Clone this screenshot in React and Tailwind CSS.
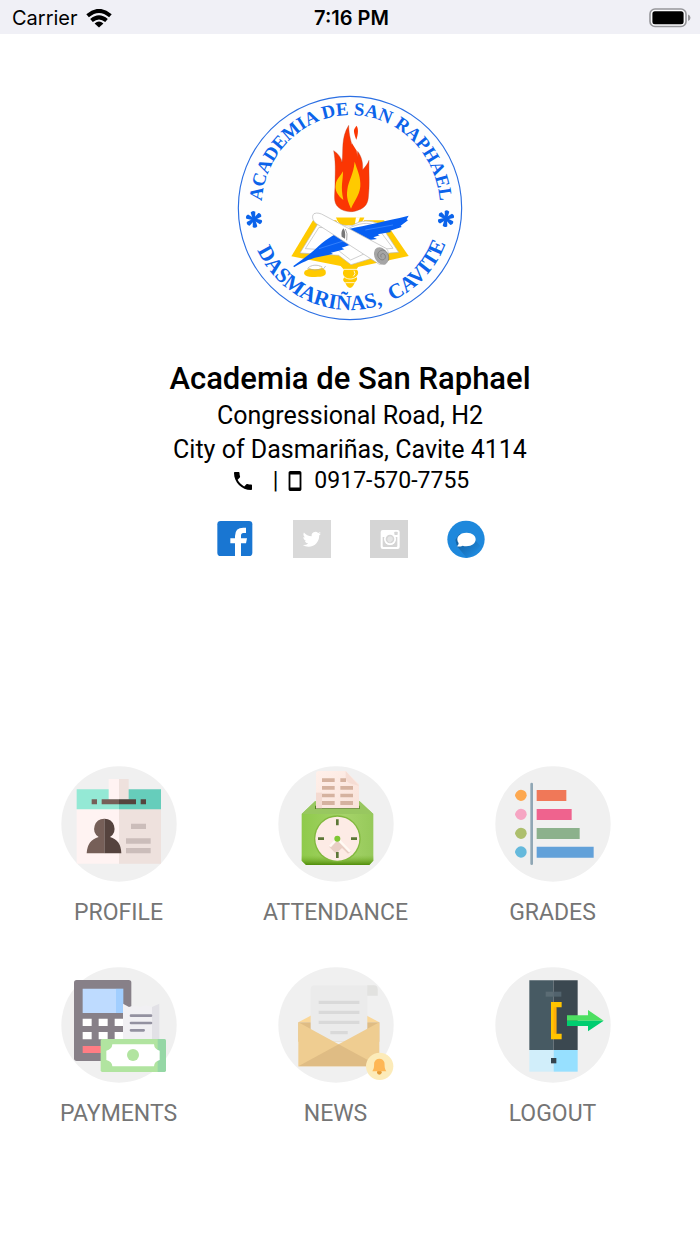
import React from "react";

function SchoolSeal() {
  return (
    <svg className="h-[236px] w-[240px]" viewBox="0 0 720 708" role="img" aria-label="School seal">
      <defs>
        <path id="seal-top" d="M94 356 A266 279 0 0 1 630 356" />
        <path id="seal-bottom" d="M54 354 A306 306 0 0 0 666 354" />
      </defs>
      <circle cx="360" cy="354" r="335" fill="#fefefe" stroke="#2b6fe3" strokeWidth="3.5" />
      <g fill="#0b63ea" fontFamily="'Liberation Serif', serif" fontWeight="700">
        <text fontSize="56" textAnchor="middle">
          <textPath href="#seal-top" startOffset="50%">ACADEMIA DE SAN RAPHAEL</textPath>
        </text>
        <text fontSize="64" textAnchor="middle">
          <textPath href="#seal-bottom" startOffset="37%">DASMARIÑAS,</textPath>
        </text>
        <text fontSize="64" textAnchor="middle">
          <textPath href="#seal-bottom" startOffset="76.2%">CAVITE</textPath>
        </text>
      </g>
      <g fill="#0b63ea">
        {[[72, 388], [648, 386]].map(([x, y]) => (
          <g key={x} transform={`translate(${x} ${y}) rotate(${x < 300 ? -8 : 8})`}>
            {[0, 60, 120, 180, 240, 300].map((a) => (
              <path key={a} d="M-3 2 L-7 -22 Q0 -29 7 -22 L3 2Z" transform={`rotate(${a})`} />
            ))}
          </g>
        ))}
      </g>
      {/* flame */}
      <path d="M356 106 C357 138 364 158 370 177 C373 198 373 212 374 214 C384 208 380 196 383 184 C396 202 399 219 398 239 C407 230 413 221 417 211 C416 250 420 280 415 323 C413 345 400 355 388 359 C370 368 342 368 325 352 C308 337 315 315 315 280 C316 240 317 216 311 182 C326 192 334 204 336 217 C341 180 332 145 356 106Z" fill="#fb3603" stroke="#b3462a" strokeWidth="1" />
      <path d="M366 160 L380 182 L386 240 H366Z" fill="#fb3603" />
      <path d="M379 107 C386 113 385 133 379 149 C376 142 371 127 372 120 C374 114 377 112 379 107Z" fill="#fb3603" />
      <path d="M339 244 C339 275 331 286 340 330 C323 316 314 300 317 284 C319 266 331 260 339 244Z" fill="#ffca00" />
      <path d="M374 215 C381 239 390 253 391 280 C393 309 375 329 363 356 C356 338 348 324 352 299 C356 270 370 256 374 215Z" fill="#ffca00" />
      {/* stand and book */}
      <path d="M249 391 L462 391 L536 498 L366 535 L184 499Z" fill="#ffca00" />
      <path d="M316 381 H405 C401 394 394 400 385 407 H337 C327 402 320 395 316 381Z" fill="#ffca00" stroke="#fff" strokeWidth="3" />
      <path d="M378 382 H390 L384 399 H375Z" fill="#fff" />
      <g fill="#fff" stroke="#b8b8b8" strokeWidth="2">
        <path d="M262 404 L340 405 Q358 411 369 406 C392 389 420 390 451 403 L506 487 L478 489 L363 524 L326 496 L210 489Z" />
        <path d="M267 412 L348 419 C388 398 415 395 439 408 L489 475 L428 480 L362 510 L326 482 L226 476Z" />
      </g>
      {/* feather */}
      <path d="M190 528 C222 506 246 487 266 468 C290 446 327 424 356 417 C411 405 460 395 536 377 L530 388 L534 391 L512 407 L515 411 L480 422 L483 426 L443 433 L449 436 L430 442 L441 447 L388 454 C365 464 345 470 335 473 L343 478 L303 488 L309 492 L265 501 C236 507 212 520 192 532Z" fill="#075ff2" />
      <path d="M267 476 L375 442 M406 420 L489 405" fill="none" stroke="#4a8fff" strokeWidth="2" />
      {/* scroll */}
      <path d="M252 371 C262 367 272 370 282 376 L468 475 C486 489 463 526 448 523 L264 404 C251 398 242 380 252 371Z" fill="#fff" stroke="#b5b5b5" strokeWidth="2" />
      <path d="M340 415 Q348 424 345 446 L335 440 Q332 425 340 415Z" fill="#777" />
      <path d="M346 417 Q354 429 350 451" fill="none" stroke="#aaa" strokeWidth="3" />
      <ellipse cx="454" cy="498" rx="20" ry="28" transform="rotate(-28 454 498)" fill="#a5a5a5" />
      <path d="M454 502 C448 493 459 486 465 495 C470 506 459 514 450 507 C438 498 443 483 457 480 C471 481 480 497 475 512" fill="none" stroke="#737373" strokeWidth="2" />
      {/* ink pot */}
      <path d="M235 538 C244 525 266 523 278 535 L286 541 C292 557 281 561 255 561 C229 561 216 554 225 542Z" fill="#ffca00" />
      <path d="M236 535 C244 524 266 524 276 534 Q256 541 236 535Z" fill="#fff" />
      <path d="M232 536 Q253 544 280 537 L287 528 M234 534 C243 525 260 522 277 531" fill="none" stroke="#aaa" strokeWidth="2" />
      {/* stand base */}
      <path d="M332 528 H386 L380 538 C388 548 384 555 378 560 C386 567 378 573 374 578 C370 588 366 593 360 594 C352 592 348 584 346 578 C337 572 338 566 345 561 C337 554 338 546 342 539Z" fill="#ffca00" />
      <path d="M341 538 H381 M344 562 C355 569 367 569 379 561 M346 578 H374 M372 542 Q379 552 370 559" fill="none" stroke="#fff" strokeWidth="2.5" />
    </svg>
  );
}

const tileSvg = "size-[116px]";

function ProfileIcon() {
  return (
    <svg className={tileSvg} viewBox="33 33 348 348" aria-hidden="true">
      <circle cx="207" cy="207" r="173" fill="#f0f0f0" />
      <path d="M80 162H207V326H80z" fill="#fff3f2" /><path d="M207 162H333V326H207z" fill="#eee1dd" />
      <path d="M80 103H207V163H80z" fill="#94e9d5" /><path d="M207 103H333V163H207z" fill="#66cdbb" />
      <path d="M176 72H207V134H176z" fill="#fff3f2" /><path d="M207 72H236V134H207z" fill="#eee1dd" />
      <path d="M125 133h16v15h-16zM155 133h52v15h-52z" fill="#765f58" />
      <path d="M207 133h51v15h-51zM272 133h16v15h-16z" fill="#55433e" />
      <path d="M163 191A30 30 0 0 0 146 246Q112 255 110 295H163Z" fill="#765f58" />
      <path d="M163 191A30 30 0 0 1 180 246Q213 255 214 295H163Z" fill="#55433e" />
      <path d="M243 206h45v16h-45zM228 250h74v16h-74zM228 279h74v16h-74z" fill="#cbbdba" />
    </svg>
  );
}

function AttendanceIcon() {
  return (
    <svg className={tileSvg} viewBox="54 33 348 348" aria-hidden="true">
      <defs>
        <linearGradient id="att-box" x1="0" y1="0" x2="1" y2="0"><stop stopColor="#8fca4b" /><stop offset=".6" stopColor="#a5d369" /><stop offset="1" stopColor="#96c95a" /></linearGradient>
        <linearGradient id="att-foot" x1="0" y1="0" x2="0" y2="1"><stop stopColor="#7cb52e" stopOpacity="0" /><stop offset="1" stopColor="#508c0a" /></linearGradient>
        <linearGradient id="att-paper" x1="0" y1="0" x2="1" y2="1"><stop stopColor="#fff0ea" /><stop offset="1" stopColor="#f9e2d9" /></linearGradient>
      </defs>
      <circle cx="228" cy="207" r="173" fill="#f0f0f0" />
      <path d="M165 139H299L340 177V317L328 330H138L125 317V177Z" fill="url(#att-box)" />
      <path d="M165 139H299L340 177H125Z" fill="#98c760" />
      <path d="M125 300H340V317L328 330H138L125 317Z" fill="url(#att-foot)" />
      <path d="M165 152h134v10H165z" fill="#527d20" />
      <path d="M176 48H257L297 88V160H168V56Q168 48 176 48Z" fill="url(#att-paper)" />
      <path d="M168 113h18v47h-18z" fill="#efd3c9" opacity=".7" />
      <path d="M257 48L297 93L267 84Q259 80 257 70Z" fill="#f6ddd4" />
      <path d="M186 70h38v11h-38zM241 70h17v11h-17zM186 93h38v11h-38zM241 93h38v11h-38zM186 116h38v11h-38zM241 116h38v11h-38zM186 138h38v12h-38zM241 138h38v12h-38z" fill="#d5b29f" />
      <circle cx="232" cy="251" r="70" fill="#81b83d" />
      <circle cx="232" cy="251" r="66" fill="#fdebe5" />
      <path d="M231 252L208 276L228 296L246 279L264 296L272 290Z" fill="#e9cfc5" />
      <path d="M232 251L210 274M232 251L270 290" stroke="#fffaf4" strokeWidth="7" />
      <path d="M228 193h8v18h-8zM228 291h8v18h-8zM174 247h18v8h-18zM273 247h18v8h-18z" fill="#5d7737" />
      <circle cx="232" cy="251" r="9" fill="#7fc633" />
    </svg>
  );
}

function GradesIcon() {
  return (
    <svg className={tileSvg} viewBox="45 33 348 348" aria-hidden="true">
      <circle cx="219" cy="207" r="173" fill="#f0f0f0" />
      <path d="M155 87V326" stroke="#90a7b5" strokeWidth="8" strokeLinecap="round" />
      {[[121, "#fda850"], [178, "#f6a5c3"], [235, "#adbf6d"], [291, "#65b9dc"]].map(([y, c]) => (
        <path key={y} d="M-18 0C-17 -7 -10 -17 0 -17A17 17 0 0 1 0 17C-10 17 -17 7 -18 0Z" fill={c} transform={`translate(123 ${y})`} />
      ))}
      <path d="M170 105h89v33h-89z" fill="#f07858" />
      <path d="M170 162h105v33H170z" fill="#ef638e" />
      <path d="M170 219h129v33H170z" fill="#8cb18c" />
      <path d="M170 275h171v33H170z" fill="#62a1d9" />
    </svg>
  );
}

function PaymentsIcon() {
  return (
    <svg className={tileSvg} viewBox="33 36 348 348" aria-hidden="true">
      <circle cx="207" cy="210" r="173" fill="#f0f0f0" />
      <rect x="72" y="75" width="172" height="243" rx="8" fill="#878088" />
      <path d="M98 101h100v73H98z" fill="#bedbff" /><path d="M198 101h22v73h-22z" fill="#a1ceff" />
      <path d="M98 191h27v22H98zM146 191h27v22h-27zM194 191h27v22h-27zM98 231h27v22H98zM146 231h27v22h-27zM194 231h27v22h-27z" fill="#fff" />
      <path d="M98 273h56v21H98z" fill="#ff7d84" />
      <path d="M219 146L237 156L253 151L270 156L287 151L306 156V253H219Z" fill="#f1f0f3" />
      <path d="M306 156L328 146V253H306Z" fill="#e2e1e6" />
      <path d="M243 182h60M243 204h60M243 226h38" stroke="#9391a0" strokeWidth="8" strokeLinecap="round" />
      <rect x="152" y="252" width="195" height="99" rx="5" fill="#b1e4a0" />
      <path d="M323 252h20q5 0 5 5v89q0 5-5 5h-20z" fill="#95d7a5" />
      <path d="M187 268H312Q313 283 329 287V315Q313 319 312 334H187Q186 319 169 315V287Q186 283 187 268Z" fill="#fff" />
      <circle cx="249" cy="300" r="18" fill="#b1e4a0" />
    </svg>
  );
}

function NewsIcon() {
  return (
    <svg className={tileSvg} viewBox="54 36 348 348" aria-hidden="true">
      <circle cx="228" cy="210" r="173" fill="#f0f0f0" />
      <path d="M115 202L236 137L358 202Z" fill="#fad798" />
      <path d="M115 202H358V260H115Z" fill="#dfbc84" />
      <path d="M165 91H341Q353 91 353 104V122H322V260H152V104Q152 91 165 91Z" fill="#ebebeb" />
      <path d="M322 91H341Q353 91 353 104V122H322Z" fill="#e2e2e0" />
      <path d="M176 137h122v10H176zM176 167h122v10H176zM176 197h122v10H176zM211 228h52v10h-52z" fill="#d9d9d9" />
      <path d="M115 202L236 268L358 202V334H115Z" fill="#efcd91" />
      <path d="M115 334L236 268L358 334Z" fill="#dfbc84" />
      <circle cx="359" cy="334" r="41" fill="#fcebb9" />
      <circle cx="358" cy="352" r="7" fill="#e49b36" />
      <path d="M337 349C345 337 341 328 343 322Q346 312 358 311Q370 312 373 322C375 333 372 338 379 349Z" fill="#feb755" />
    </svg>
  );
}

function LogoutIcon() {
  return (
    <svg className={tileSvg} viewBox="45 36 348 348" aria-hidden="true">
      <circle cx="219" cy="210" r="173" fill="#f0f0f0" />
      <path d="M148 76h73v209h-73z" fill="#475a63" /><path d="M221 76h72v209h-72z" fill="#3b4850" />
      <path d="M148 285h73v65h-73z" fill="#d1eefa" /><path d="M221 285h72v65h-72z" fill="#97e0ff" />
      <path d="M197 110h24v15h-24z" fill="#5b6c74" /><path d="M221 110h23v15h-23z" fill="#52636d" />
      <path d="M213 141h32v16h-16v79h16v17h-32z" fill="#ffc400" /><path d="M221 157h8v79h-8z" fill="#ffad09" />
      <path d="M213 309h16v16h-16z" fill="#34444e" />
      <path d="M261 181H324V165L371 197H261Z" fill="#4cdf61" />
      <path d="M261 197H371L324 229V213H261Z" fill="#00cd70" />
    </svg>
  );
}

const tiles = [
  ["PROFILE", ProfileIcon],
  ["ATTENDANCE", AttendanceIcon],
  ["GRADES", GradesIcon],
  ["PAYMENTS", PaymentsIcon],
  ["NEWS", NewsIcon],
  ["LOGOUT", LogoutIcon],
];

function StatusBar() {
  return (
    <div className="grid h-[34px] grid-cols-3 items-center bg-[#f0f0f6] pl-3 pr-[9px] pt-[2px] font-[Inter,sans-serif] text-[20px] leading-6">
      <div className="flex items-center gap-2">
        <span>Carrier</span>
        <svg className="h-[19px] w-[26px]" viewBox="0 0 26 19" role="img" aria-label="Wi-Fi">
          <g fill="none" stroke="#000" strokeWidth="4">
            <path d="M1.6 6.8Q13 -3 24.4 6.8" />
            <path d="M5.5 11.6Q13 5.2 20.5 11.6" />
          </g>
          <path d="M13 18.6L8.6 14.4Q13 10.8 17.4 14.4Z" />
        </svg>
      </div>
      <div className="text-center font-semibold">7:16 PM</div>
      <svg className="h-[20px] w-[42px] justify-self-end" viewBox="0 0 42 20" role="img" aria-label="Battery full">
        <rect x="1" y="1" width="36" height="17.5" rx="5" fill="#fafafc" stroke="#96969a" strokeWidth="1.6" />
        <rect x="3.4" y="3.3" width="31.2" height="13" rx="2.5" />
        <path d="M39 6.5q2.5 1 2.5 3.3T39 13z" fill="#96969a" />
      </svg>
    </div>
  );
}

function SocialLinks() {
  return (
    <nav className="mt-[25px] flex justify-center gap-[39px]" aria-label="Social links">
      <a href="#facebook" aria-label="Facebook" className="block size-[38px]">
        <svg viewBox="0 0 114 114" aria-hidden="true">
          <rect x="4" y="3" width="105" height="105" rx="10" fill="#1976d2" />
          <path d="M57 108V70H43V55H57V48Q57 23 82 23H90V39H82Q75 39 75 47V55H93L90 70H75V108Z" fill="#fff" />
        </svg>
      </a>
      <a href="#twitter" aria-label="Twitter" className="block size-[38px]">
        <svg viewBox="0 0 114 114" aria-hidden="true">
          <path d="M0 0H114V114H0z" fill="#d9d9d9" />
          <path transform="translate(29 30) scale(2.3)" d="M23.95 4.57a10 10 0 0 1-2.82.77 4.96 4.96 0 0 0 2.16-2.72c-.95.55-2 .95-3.13 1.18a4.92 4.92 0 0 0-8.38 4.48C7.69 8.1 4.07 6.13 1.64 3.16a4.82 4.82 0 0 0-.67 2.48c0 1.71.87 3.21 2.19 4.1a4.9 4.9 0 0 1-2.23-.62v.06a4.92 4.92 0 0 0 3.95 4.83 5 5 0 0 1-2.21.08 4.94 4.94 0 0 0 4.6 3.42A9.87 9.87 0 0 1 0 19.54a13.99 13.99 0 0 0 7.56 2.21c9.05 0 14-7.5 14-13.98 0-.21 0-.42-.02-.63a9.94 9.94 0 0 0 2.41-2.57z" fill="#fff" />
        </svg>
      </a>
      <a href="#instagram" aria-label="Instagram" className="block size-[38px]">
        <svg viewBox="0 0 114 114" aria-hidden="true">
          <path d="M0 0H114V114H0z" fill="#d5d5d5" />
          <rect x="32" y="30" width="57" height="57" rx="6" fill="#fff" />
          <path d="M38 51H45Q42 75 60 75Q79 75 76 51H82V78Q82 81 79 81H41Q38 81 38 78Z" fill="#d5d5d5" />
          <rect x="73" y="35" width="10" height="10" rx="2" fill="#d5d5d5" />
          <circle cx="60" cy="57" r="18" fill="#fff" />
          <circle cx="60" cy="57" r="13" fill="#d5d5d5" />
          <path d="M55 51Q61 46 68 53V61L60 68Q51 64 52 56Z" fill="#e6e6e6" />
        </svg>
      </a>
      <a href="#messages" aria-label="Messages" className="block size-[38px]">
        <svg viewBox="0 0 114 114" aria-hidden="true">
          <defs>
            <linearGradient id="msg-shade" x1=".2" y1=".3" x2=".75" y2=".9"><stop stopColor="#1464a6" /><stop offset="1" stopColor="#1e88dc" /></linearGradient>
          </defs>
          <circle cx="57" cy="58" r="56" fill="#1e88dc" />
          <path d="M30 79L59 113Q73 108 82 101L100 78L84 60L37 42L25 60Z" fill="url(#msg-shade)" />
          <path d="M59 38C76 38 86 47 86 58C86 70 75 79 58 79Q52 79 47 77Q39 81 30 79Q35 75 35 70C24 53 37 38 59 38Z" fill="#fff" />
        </svg>
      </a>
    </nav>
  );
}

export default function App() {
  return (
    <div className="min-h-screen bg-white font-[Roboto,sans-serif] text-black">
      <StatusBar />
      <main>
        <header className="flex flex-col items-center pt-14 text-center">
          <SchoolSeal />
          <h1 className="mt-[33px] text-[31px] font-medium leading-10">Academia de San Raphael</h1>
          <p className="text-[25px] leading-[34px]">Congressional Road, H2</p>
          <p className="text-[25px] leading-[34px]">City of Dasmariñas, Cavite 4114</p>
          <div className="flex items-center text-[23px] leading-7">
            <svg className="size-6" viewBox="0 0 24 24" role="img" aria-label="Telephone">
              <path d="M6.62 10.79c1.44 2.83 3.76 5.14 6.59 6.59l2.2-2.2c.27-.27.67-.36 1.02-.24 1.12.37 2.33.57 3.57.57.55 0 1 .45 1 1V20c0 .55-.45 1-1 1-9.39 0-17-7.61-17-17 0-.55.45-1 1-1h3.5c.55 0 1 .45 1 1 0 1.25.2 2.45.57 3.57.11.35.03.74-.25 1.02l-2.2 2.2z" />
            </svg>
            <span className="ml-[18px] mr-[6px]">|</span>
            <svg className="size-[22px]" viewBox="0 0 24 24" role="img" aria-label="Mobile">
              <path d="M17 1.01L7 1c-1.1 0-1.99.9-1.99 2v18c0 1.1.89 2 1.99 2h10c1.1 0 2-.9 2-2V3c0-1.1-.9-1.99-2-1.99zM17 19H7V5h10v14z" />
            </svg>
            <span className="ml-2">0917-570-7755</span>
          </div>
        </header>
        <SocialLinks />
        <nav className="mt-[208px] grid grid-cols-3 gap-y-10 pl-[10px] pr-[39px]" aria-label="Main menu">
          {tiles.map(([label, Icon]) => (
            <button key={label} type="button" className="flex flex-col items-center gap-[17px] text-[23px] leading-7 text-[#757575]">
              <Icon />
              <span>{label}</span>
            </button>
          ))}
        </nav>
      </main>
    </div>
  );
}
